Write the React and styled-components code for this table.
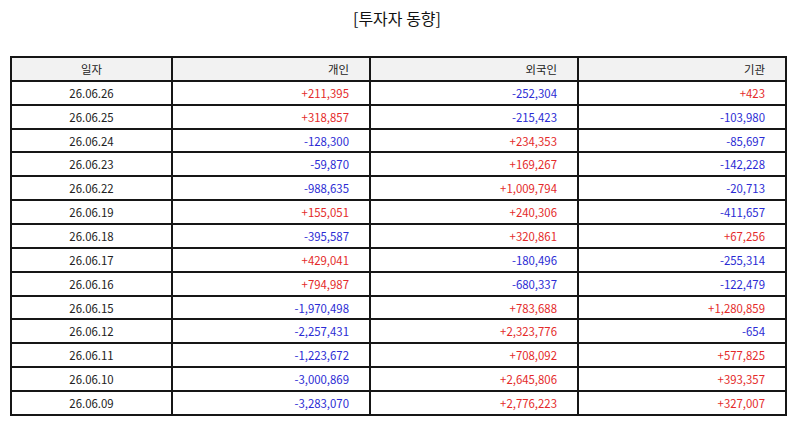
import React from 'react'
import styled, {createGlobalStyle} from 'styled-components'

const GlobalStyle = createGlobalStyle`
  html, body {
    margin: 0;
    padding: 0;
    background: #fff;
  }
  body {
    font-family: "Noto Sans CJK KR", "Noto Sans", sans-serif;
  }
`;

const rows = [
  ['26.06.26', '+211,395', '-252,304', '+423'],
  ['26.06.25', '+318,857', '-215,423', '-103,980'],
  ['26.06.24', '-128,300', '+234,353', '-85,697'],
  ['26.06.23', '-59,870', '+169,267', '-142,228'],
  ['26.06.22', '-988,635', '+1,009,794', '-20,713'],
  ['26.06.19', '+155,051', '+240,306', '-411,657'],
  ['26.06.18', '-395,587', '+320,861', '+67,256'],
  ['26.06.17', '+429,041', '-180,496', '-255,314'],
  ['26.06.16', '+794,987', '-680,337', '-122,479'],
  ['26.06.15', '-1,970,498', '+783,688', '+1,280,859'],
  ['26.06.12', '-2,257,431', '+2,323,776', '-654'],
  ['26.06.11', '-1,223,672', '+708,092', '+577,825'],
  ['26.06.10', '-3,000,869', '+2,645,806', '+393,357'],
  ['26.06.09', '-3,283,070', '+2,776,223', '+327,007'],
]

const Page = styled.div`
  width: 794px;
  height: 425px;
  padding-top: 6px;
  box-sizing: border-box;
`;

const Title = styled.h1`
  margin: 0;
  height: 50px;
  text-align: center;
  font-size: 16px;
  font-weight: 400;
  line-height: 24px;
  color: #111;
`;

const Table = styled.table`
  margin-left: 10px;
  width: 776px;
  border-collapse: collapse;
  table-layout: fixed;
  font-size: 11.4px;
  color: #222;
`;

const Row = styled.tr`
  height: 23.86px;
  background: ${p => (p.$head ? '#f2f2f2' : '#fff')};
`;

const Cell = styled.td`
  border: 2px solid #161616;
  padding: 0 20px 0 0;
  text-align: ${p => (p.$center ? 'center' : 'right')};
  line-height: 14px;
  white-space: nowrap;
  color: ${p => (p.$value ? (p.$value.startsWith('+') ? '#e42a2a' : '#2b2bd4') : '#222')};
  ${p => p.$center && 'padding: 0;'}
`;

const App = () => {
  return (
    <Page>
      <GlobalStyle />
      <Title>[투자자 동향]</Title>
      <Table>
        <colgroup>
          <col style={{width: 161}} />
          <col style={{width: 198}} />
          <col style={{width: 208}} />
          <col style={{width: 208}} />
        </colgroup>
        <thead>
          <Row $head>
            <Cell $center>일자</Cell>
            <Cell>개인</Cell>
            <Cell>외국인</Cell>
            <Cell>기관</Cell>
          </Row>
        </thead>
        <tbody>
          {rows.map(r => (
            <Row key={r[0]}>
              <Cell $center>{r[0]}</Cell>
              <Cell $value={r[1]}>{r[1]}</Cell>
              <Cell $value={r[2]}>{r[2]}</Cell>
              <Cell $value={r[3]}>{r[3]}</Cell>
            </Row>
          ))}
        </tbody>
      </Table>
    </Page>
  )
}

export default App
